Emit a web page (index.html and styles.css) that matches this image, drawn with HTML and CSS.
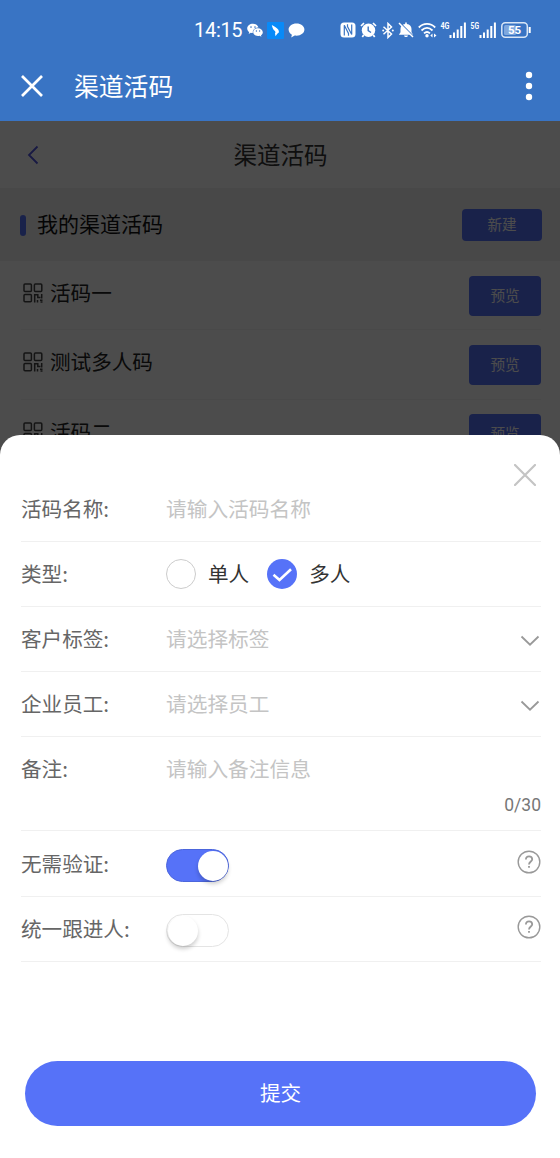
FILE: index.html
```html
<!DOCTYPE html>
<html lang="zh-CN">
<head>
<meta charset="utf-8">
<title>渠道活码</title>
<link rel="stylesheet" href="styles.css">
</head>
<body>
<svg class="defs" width="0" height="0">
  <symbol id="qr" viewBox="0 0 20 20">
    <g fill="none" stroke="currentColor" stroke-width="1.5">
      <rect x="1" y="1" width="7.4" height="7.4" rx="1"/>
      <rect x="11.4" y="1" width="7.4" height="7.4" rx="1"/>
      <rect x="1" y="11.4" width="7.4" height="7.4" rx="1"/>
      <path d="M11.700 19.500V11.700H14.800V14.500H17.500M18.700 11V15.500M14.500 17V19.500M17 17.200H19.500M17.500 19H19.500"/>
    </g>
  </symbol>
  <symbol id="help" viewBox="0 0 24 24">
    <g fill="none" stroke="currentColor" stroke-width="1.4">
      <circle cx="12" cy="12" r="10.8"/>
      <path stroke-width="1.8" d="M8.900 9.500C8.900 7.400 10.200 6.400 12 6.400S15.200 7.400 15.200 9.300C15.200 11.400 12 11.600 12 14.500M12 15.900V17.700"/>
    </g>
  </symbol>
  <symbol id="chevron" viewBox="0 0 20 12">
    <path d="M1.500 1.500L10 9.700L18.500 1.500" fill="none" stroke="currentColor" stroke-width="1.8"/>
  </symbol>
</svg>
<div class="phone">
  <header class="top">
    <div class="status">
      <span class="time">14:15</span>
      <svg class="s-wechat" width="16" height="14" viewBox="0 0 16 14">
        <path fill="#fff" d="M6 .7C2.7.7.2 2.8.2 5.5c0 1.5.8 2.8 2 3.6l-.5 1.8 2.1-1.1c.7.2 1.3.3 2 .3C5.2 7 7.700 4.500 11.500 4.500 10.900 2.300 8.700.7 6 .7z"/>
        <path fill="#fff" d="M11 5.200c-2.700 0-4.800 1.700-4.800 3.900S8.300 13 11 13c.6 0 1.100-.1 1.600-.2l1.800.9-.4-1.500c1.100-.7 1.800-1.800 1.800-3 0-2.300-2.200-4-4.800-4z"/>
        <g fill="#3974c4"><circle cx="4" cy="4.100" r=".8"/><circle cx="8" cy="4.100" r=".8"/><circle cx="9.400" cy="8" r=".7"/><circle cx="12.600" cy="8" r=".7"/></g>
      </svg>
      <svg class="s-bird" width="17" height="17" viewBox="0 0 17 17">
        <rect width="17" height="17" rx="1" fill="#098af8"/>
        <path fill="#fff" d="M4.800 3C8 4.500 10.500 6.200 11.500 8L12 10.300 10.300 11.800 8.500 14.300 8 11.300C9 10.500 8.500 9.500 7 8.300 6 7 5.200 5 4.800 3z"/>
      </svg>
      <svg class="s-chat" width="17" height="15" viewBox="0 0 17 15">
        <path fill="#fff" d="M8.500.5C4 .5.600 3.200.600 6.600c0 2.200 1.300 4.100 3.300 5.200L3.200 14.500l3.500-1.900c.6.1 1.200.1 1.800.1 4.500 0 7.900-2.700 7.900-6.100S13 .5 8.500.5z"/>
      </svg>
      <svg class="s-nfc" width="16" height="16" viewBox="0 0 16 16">
        <rect x=".5" y=".5" width="15" height="15" rx="3.500" fill="#fff"/>
        <path d="M4.300 13.500V3.200L8.500 11.500V13.800M7.500 2.200V4.500L11.700 12.500V2.500" fill="none" stroke="#3974c4" stroke-width="1.200"/>
      </svg>
      <svg class="s-alarm" width="17" height="16" viewBox="0 0 17 16">
        <circle cx="8.500" cy="8.300" r="6.700" fill="#fff"/>
        <path d="M1 4L4 1M13 1L16 4M3.700 13L2.300 15M13.300 13L14.700 15" stroke="#fff" stroke-width="1.700"/>
        <path d="M8.200 4.500V8.700L11 10.500" fill="none" stroke="#3974c4" stroke-width="1.400"/>
      </svg>
      <svg class="s-bt" width="12" height="17" viewBox="0 0 12 17">
        <path d="M1.500 4.800L9.500 12 6 15.500V1.500L9.500 5 1.500 12.200" fill="none" stroke="#fff" stroke-width="1.500"/>
        <circle cx="1.200" cy="8.500" r="1" fill="#fff"/><circle cx="10.800" cy="8.500" r="1" fill="#fff"/>
      </svg>
      <svg class="s-bell" width="16" height="16" viewBox="0 0 16 16">
        <path fill="#fff" d="M7.200 2V.6H8.800V2C12 2.300 13.500 4.500 13.500 7v3.300l1.600 2.400H.9L2.500 10.300V7c0-2.500 1.500-4.700 4.700-5zM6 13.500h4c-.4 2-3.600 2-4 0z"/>
        <path d="M2 .8L16 14.800" stroke="#3974c4" stroke-width="1.300"/><path d="M1 1L15 15" stroke="#fff" stroke-width="1.500"/>
      </svg>
      <svg class="s-wifi" width="19" height="16" viewBox="0 0 19 16">
        <path d="M.8 5.500C5.500.7 12.500.7 17.200 5.500M3.500 8.500C7 5.100 11 5.100 14.500 8.500M6 11.400C8 9.600 10 9.600 12 11.400" fill="none" stroke="#fff" stroke-width="1.800"/>
        <circle cx="9" cy="13.700" r="1.700" fill="#fff"/><path fill="#fff" d="M12.300 13.500L14.500 11.500V15.500zM18.500 13.500L16 11.500V15.500z"/>
      </svg>
      <svg class="s-sig" width="27" height="18" viewBox="0 0 27 18">
        <text class="net" x=".5" y="7.500" textLength="9" lengthAdjust="spacingAndGlyphs">4G</text>
        <path d="M10.500 17V14M14 17V11.500M17.700 17V8.500M21.300 17V5M24.900 17V1.500" stroke="#fff" stroke-width="2"/>
      </svg>
      <svg class="s-sig2" width="27" height="18" viewBox="0 0 27 18">
        <text class="net" x=".5" y="7.500" textLength="8.500" lengthAdjust="spacingAndGlyphs">5G</text>
        <path d="M10.500 17V14M14 17V11.500M17.700 17V8.500M21.300 17V5M24.900 17V1.500" stroke="#fff" stroke-width="2"/>
      </svg>
      <svg class="s-bat" width="31" height="16" viewBox="0 0 31 16">
        <rect x=".8" y=".8" width="25.500" height="14.400" rx="3.500" fill="none" stroke="#d9e6f6" stroke-width="1.500"/>
        <rect x="3" y="3" width="12" height="10" rx="1.500" fill="#7fa8de"/>
        <path d="M28.700 5V11" stroke="#fff" stroke-width="2"/>
        <text class="pct" x="13.500" y="12">55</text>
      </svg>
    </div>
    <div class="appbar">
      <svg class="x" width="22" height="22" viewBox="0 0 22 22"><path d="M1 1L21 21M21 1L1 21" stroke="#fff" stroke-width="2.700"/></svg>
      <span class="app-title">渠道活码</span>
      <svg class="more" width="8" height="30" viewBox="0 0 8 30" fill="#fff"><circle cx="4" cy="4" r="3.200"/><circle cx="4" cy="15" r="3.200"/><circle cx="4" cy="26" r="3.200"/></svg>
    </div>
  </header>

  <main class="page">
    <div class="nav">
      <svg class="back" width="12" height="20" viewBox="0 0 12 20"><path d="M10.500 1.500L2 10L10.500 18.500" fill="none" stroke="currentColor" stroke-width="1.800"/></svg>
      <span class="nav-title">渠道活码</span>
    </div>
    <div class="section">
      <i class="bar"></i><span class="section-title">我的渠道活码</span><button class="btn new">新建</button>
    </div>
    <div class="item"><svg class="qr"><use href="#qr"/></svg><span>活码一</span><button class="btn">预览</button></div>
    <div class="item"><svg class="qr"><use href="#qr"/></svg><span>测试多人码</span><button class="btn">预览</button></div>
    <div class="item"><svg class="qr"><use href="#qr"/></svg><span>活码二</span><button class="btn">预览</button></div>
    <div class="mask"></div>
  </main>

  <section class="sheet">
    <div class="close-row"><svg width="22" height="22" viewBox="0 0 22 22"><path d="M1 1L21 21M21 1L1 21" stroke="#c4c4c4" stroke-width="2.200" stroke-linecap="round"/></svg></div>
    <div class="row"><label class="label">活码名称:</label><span class="hint">请输入活码名称</span></div>
    <div class="row">
      <label class="label">类型:</label>
      <i class="radio"></i><span class="opt">单人</span>
      <svg class="checked" width="30" height="30" viewBox="0 0 30 30"><circle cx="15" cy="15" r="15" fill="#5672f8"/><path d="M6.500 15.800L12.500 21L24 10.300" fill="none" stroke="#fff" stroke-width="2.600"/></svg><span class="opt">多人</span>
    </div>
    <div class="row"><label class="label">客户标签:</label><span class="hint">请选择标签</span><svg class="chev"><use href="#chevron"/></svg></div>
    <div class="row"><label class="label">企业员工:</label><span class="hint">请选择员工</span><svg class="chev"><use href="#chevron"/></svg></div>
    <div class="row note">
      <label class="label">备注:</label><span class="hint">请输入备注信息</span>
      <span class="count">0/30</span>
    </div>
    <div class="row"><label class="label">无需验证:</label><span class="switch on"><i class="knob"></i></span><svg class="help"><use href="#help"/></svg></div>
    <div class="row"><label class="label">统一跟进人:</label><span class="switch"><i class="knob"></i></span><svg class="help"><use href="#help"/></svg></div>
    <button class="submit">提交</button>
  </section>
</div>
</body>
</html>
```

FILE: styles.css
```css
* { box-sizing: border-box; }
body { margin: 0; font-family: "Noto Sans CJK SC", sans-serif; }
button { border: 0; padding: 0; font-family: inherit; }
svg { flex: none; display: block; }
.defs { position: absolute; }
.phone { position: relative; width: 560px; height: 1158px; overflow: hidden; background: #fff; }

.top { height: 121px; background: #3974c4; color: #fff; }
.status { display: flex; align-items: center; height: 60px; padding-left: 194px; }
.time { width: 53px; font: 20px/24px Roboto, sans-serif; letter-spacing: -.3px; }
.s-bird { margin-left: 4px; }
.s-chat { margin-left: 4px; }
.s-nfc { margin-left: 35px; }
.s-alarm { margin-left: 4px; }
.s-bt { margin-left: 5px; }
.s-bell { margin-left: 4px; }
.s-wifi { margin-left: 4px; }
.s-sig { margin-left: 3px; }
.s-sig2 { margin-left: 3px; }
.s-bat { margin-left: 4px; }
.net { font: bold 8.500px Roboto, sans-serif; fill: #fff; }
.pct { font: bold 11.500px Roboto, sans-serif; fill: #fff; text-anchor: middle; }
.appbar { display: flex; align-items: center; height: 52px; padding: 0 27px 0 21px; }
.app-title { margin: -1px 0 1px 31px; font-size: 24.800px; line-height: 36px; }
.more { margin-left: auto; }

.page { position: relative; height: 340px; overflow: hidden; background: #fff; color: #222; }
.mask { position: absolute; inset: 0; background: rgba(0, 0, 0, .7); }
.nav { display: flex; align-items: center; height: 67px; padding: 0 27px; }
.back { color: #5054e0; }
.nav-title { flex: 1; margin: -2px 11px 0 0; text-align: center; font-size: 23.500px; line-height: 34px; color: #333; }
.section { display: flex; align-items: center; height: 73px; padding: 0 18px 0 20px; background: #f0f0f0; color: #111; }
.bar { width: 6px; height: 21px; margin-top: 1px; border-radius: 3px; background: #5672f8; }
.section-title { margin: -3px 0 0 11px; font-size: 21px; line-height: 30px; }
.btn { width: 72px; height: 40px; margin-top: 1px; margin-left: auto; padding-bottom: 2px; border-radius: 4px; background: #5672f8; color: #fff; font-size: 14.600px; line-height: 22px; }
.btn.new { width: 80px; height: 32px; margin-top: 0; }
.item { display: flex; align-items: center; height: 69.300px; margin: 0 19px 0 21px; border-bottom: 1px solid #f6f6f6; font-size: 20.600px; line-height: 30px; }
.item span { margin: -6px 0 0 7px; }
.qr { width: 20px; height: 20px; margin-left: 2px; margin-top: -4px; color: #444; }

.sheet { position: absolute; left: 0; right: 0; top: 435px; bottom: 0; padding: 0 19px 0 21px; border-radius: 20px 20px 0 0; background: #fff; }
.close-row { display: flex; justify-content: flex-end; height: 41.500px; padding: 29px 5px 0 0; }
.row { display: flex; align-items: center; height: 65.100px; border-bottom: 1px solid #f0f0f0; font-size: 20.600px; line-height: 30px; }
.label { width: 145px; margin-top: -2px; color: #666; }
.hint { margin-top: -2px; color: #c4c4c4; font-size: 20.700px; }
.radio { width: 30px; height: 30px; margin-top: 1px; border: 1.500px solid #ccc; border-radius: 50%; }
.opt { margin: -2px 0 0 12px; color: #333; }
.checked { margin-top: 1px; margin-left: 18px; }
.chev { width: 20px; height: 12px; margin-top: 4px; margin-left: auto; margin-right: 1px; color: #999; }
.note { flex-wrap: wrap; align-content: flex-start; height: 94.600px; padding-top: 18px; }
.count { width: 100%; margin-top: 9px; text-align: right; color: #777; font: 17.500px/26px Roboto, sans-serif; }
.switch { width: 63px; height: 33px; margin-top: 3px; padding: 1px; border: 1px solid #e4e4e4; border-radius: 17px; background: #fff; }
.switch.on { padding-left: 31px; border-color: #4c66dc; background: #5672f8; }
.knob { display: block; width: 30px; height: 30px; border-radius: 50%; background: #fff; box-shadow: 0 3px 4px rgba(0, 0, 0, .2); }
.help { width: 24px; height: 24px; margin-left: auto; margin-bottom: 4px; color: #999; }
.submit { display: block; width: 511px; height: 65px; margin: 99px 0 0 4px; padding-bottom: 3px; border-radius: 33px; background: #5672f8; color: #fff; font-size: 20.600px; line-height: 30px; }
```
